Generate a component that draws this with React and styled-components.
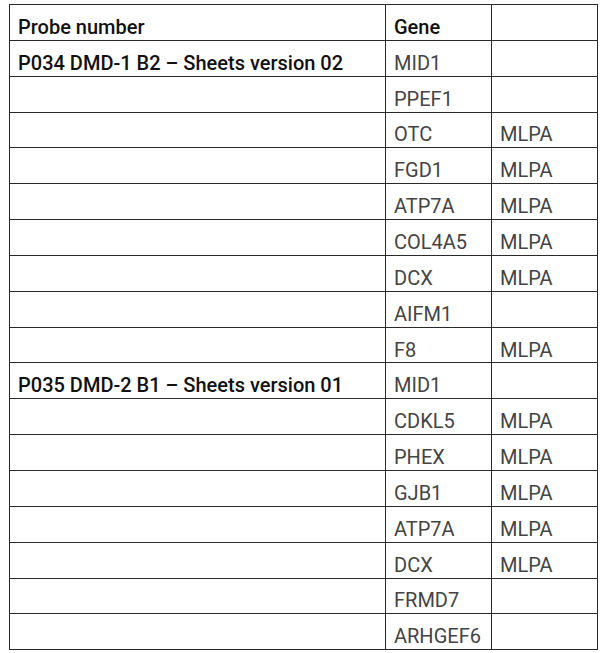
import styled, { createGlobalStyle } from 'styled-components'

const Global = createGlobalStyle`
  body {
    margin: 0;
    background: #fff;
    font-family: Roboto, "Noto Sans", sans-serif;
  }
`

const Page = styled.div`
  padding: 4px 0 0 9px;
`

const Table = styled.table`
  border-collapse: collapse;
  width: 588px;
  table-layout: fixed;
  border-top: 1px solid #8a8a8a;
  border-left: 1px solid #8a8a8a;
  border-right: 1px solid #8a8a8a;
`

const Cell = styled.td`
  border: 1px solid #2a2a2a;
  height: 35.85px;
  padding: 9px 0 0 8px;
  box-sizing: border-box;
  font-size: 20px;
  line-height: 24px;
  vertical-align: middle;
  color: ${props => (props.$bold ? '#111' : '#444')};
  font-weight: ${props => (props.$bold ? 500 : 400)};
  white-space: nowrap;
  overflow: hidden;
`

const rows = [
  ['P034 DMD-1 B2 – Sheets version 02', 'MID1', ''],
  ['', 'PPEF1', ''],
  ['', 'OTC', 'MLPA'],
  ['', 'FGD1', 'MLPA'],
  ['', 'ATP7A', 'MLPA'],
  ['', 'COL4A5', 'MLPA'],
  ['', 'DCX', 'MLPA'],
  ['', 'AIFM1', ''],
  ['', 'F8', 'MLPA'],
  ['P035 DMD-2 B1 – Sheets version 01', 'MID1', ''],
  ['', 'CDKL5', 'MLPA'],
  ['', 'PHEX', 'MLPA'],
  ['', 'GJB1', 'MLPA'],
  ['', 'ATP7A', 'MLPA'],
  ['', 'DCX', 'MLPA'],
  ['', 'FRMD7', ''],
  ['', 'ARHGEF6', ''],
]

export default function App() {
  return (
    <Page>
      <Global />
      <Table>
        <colgroup>
          <col style={{ width: 376 }} />
          <col style={{ width: 106 }} />
          <col style={{ width: 106 }} />
        </colgroup>
        <tbody>
          <tr>
            <Cell $bold>Probe number</Cell>
            <Cell $bold>Gene</Cell>
            <Cell />
          </tr>
          {rows.map((r, i) => (
            <tr key={i}>
              <Cell $bold>{r[0]}</Cell>
              <Cell>{r[1]}</Cell>
              <Cell>{r[2]}</Cell>
            </tr>
          ))}
        </tbody>
      </Table>
    </Page>
  )
}
